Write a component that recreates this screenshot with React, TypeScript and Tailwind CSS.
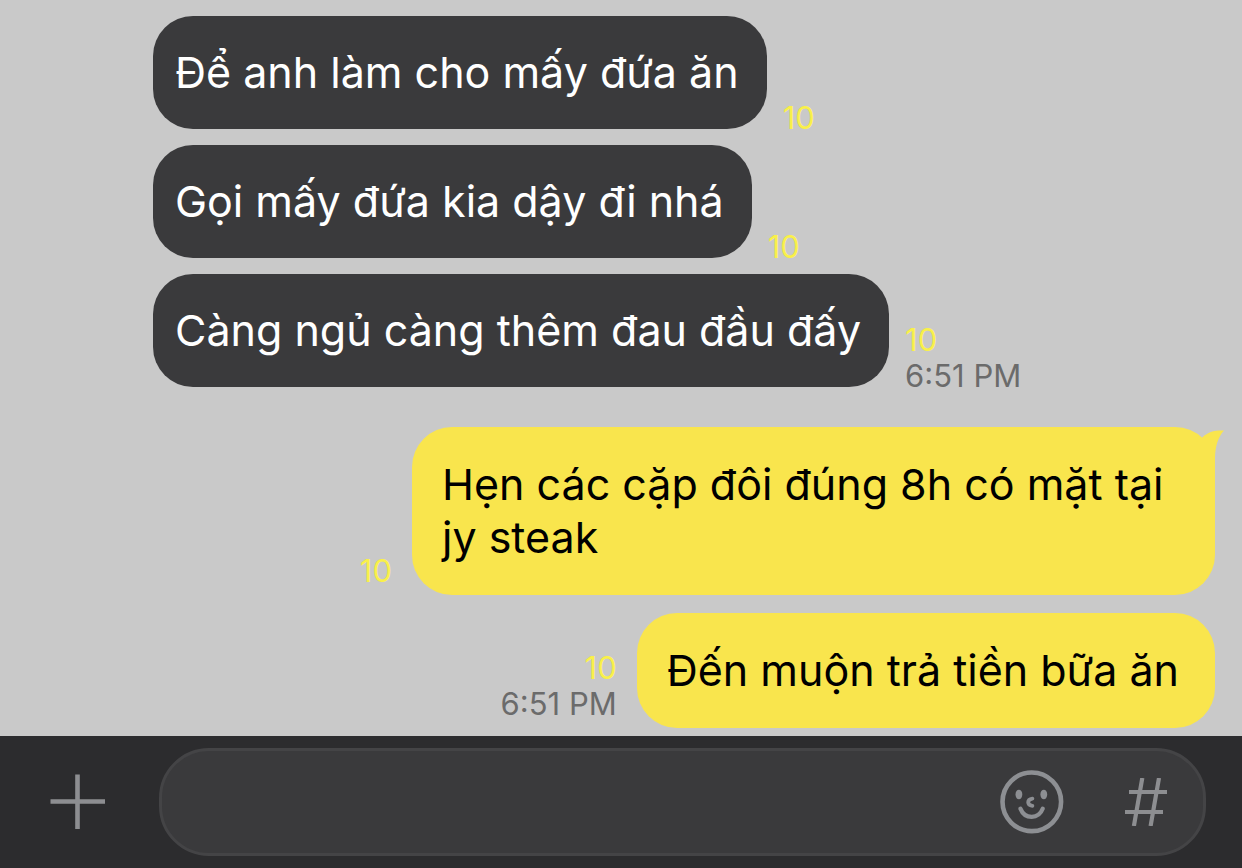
import clsx from "clsx";

interface Message {
  id: number;
  text: string;
  unread: number;
  time?: string;
  mine?: boolean;
  tail?: boolean;
}

const messages: Message[] = [
  { id: 1, text: "Để anh làm cho mấy đứa ăn", unread: 10 },
  { id: 2, text: "Gọi mấy đứa kia dậy đi nhá", unread: 10 },
  { id: 3, text: "Càng ngủ càng thêm đau đầu đấy", unread: 10, time: "6:51 PM" },
  { id: 4, text: "Hẹn các cặp đôi đúng 8h có mặt tại jy steak", unread: 10, mine: true, tail: true },
  { id: 5, text: "Đến muộn trả tiền bữa ăn", unread: 10, time: "6:51 PM", mine: true },
];

const PlusIcon = () => (
  <svg viewBox="0 0 56 56" className="size-14" fill="none" stroke="#8d8e91" strokeWidth="4.6">
    <path d="M27.5 .5v54.5M.5 27.5h54.5" />
  </svg>
);

const SmileIcon = () => (
  <svg viewBox="0 0 64 64" className="size-16" fill="none" stroke="#8d8f93" strokeLinecap="round">
    <circle cx="31.8" cy="31.8" r="29.3" strokeWidth="4.6" />
    <ellipse cx="18.9" cy="24.5" rx="3.4" ry="4.8" fill="#8d8f93" stroke="none" />
    <ellipse cx="43.8" cy="24.5" rx="3.4" ry="4.8" fill="#8d8f93" stroke="none" />
    <path d="M32.4 28.6c-5.6.8-5.6 6.6 0 7.2" strokeWidth="3.8" />
    <path d="M20.4 38.6c4.4 11 18.2 11 22.4 0" strokeWidth="4.2" />
  </svg>
);

const HashIcon = () => (
  <svg viewBox="0 0 42 48" className="h-12 w-[42px]" fill="none" stroke="#8d8e91" strokeWidth="4.2">
    <path d="M4 14h38M0 34h38" />
    <path d="M17.3 0l-8.4 48M34 0l-8.4 48" />
  </svg>
);

const BubbleTail = () => (
  <svg viewBox="0 0 28 40" className="absolute top-[3px] -right-[9px] h-10 w-7" fill="#f9e54d">
    <path d="M0 40V12L6.5 7.2C12 2 18 .2 28 .5 22 7 19 17 19 28v12z" />
  </svg>
);

const MessageRow = ({ text, unread, time, mine, tail }: Message) => (
  <li className={clsx("flex items-end", mine ? "flex-row-reverse gap-5" : "gap-4")}>
    <p
      className={clsx(
        "relative rounded-[40px] text-[43px] leading-[53px]",
        mine
          ? "max-w-[803px] bg-[#f9e54d] py-[31px] pr-9 pl-[30px] text-black"
          : "bg-[#3a3a3c] py-[30px] pr-7 pl-[22px] text-white",
      )}
    >
      {tail && <BubbleTail />}
      <span className="relative">{text}</span>
    </p>

    <div
      className={clsx(
        "shrink-0 text-[31px] leading-9",
        mine ? "mb-[6px] text-right" : "-mb-[7px]",
      )}
    >
      <div className="text-[#f9f04a]">{unread}</div>
      {time && <time className="block text-[#6b6b6b]">{time}</time>}
    </div>
  </li>
);

const Composer = () => (
  <form className="flex items-center bg-[#2c2c2e] py-3 pr-9 pl-[50px]">
    <button type="button" aria-label="Add attachment">
      <PlusIcon />
    </button>
    <div className="ml-[53px] flex h-[108px] flex-1 items-center rounded-[50px] border-[3px] border-[#444446] bg-[#3a3a3c] pr-9 pl-10">
      <input
        type="text"
        aria-label="Message"
        className="h-full min-w-0 flex-1 bg-transparent text-[43px] text-white outline-none"
      />
      <button type="button" aria-label="Emoji">
        <SmileIcon />
      </button>
      <button type="button" aria-label="Hashtag search" className="ml-[61px]">
        <HashIcon />
      </button>
    </div>
  </form>
);

const App = () => (
  <div className="flex min-h-screen flex-col bg-[#c9c9c9] font-[Inter,sans-serif]">
    <main className="flex flex-1 flex-col gap-10 pt-4 pr-[27px] pb-2 pl-[153px]">
      <ul className="flex flex-col gap-4">
        {messages
          .filter((m) => !m.mine)
          .map((m) => (
            <MessageRow key={m.id} {...m} />
          ))}
      </ul>
      <ul className="flex flex-col gap-[18px]">
        {messages
          .filter((m) => m.mine)
          .map((m) => (
            <MessageRow key={m.id} {...m} />
          ))}
      </ul>
    </main>
    <Composer />
  </div>
);

export default App;
